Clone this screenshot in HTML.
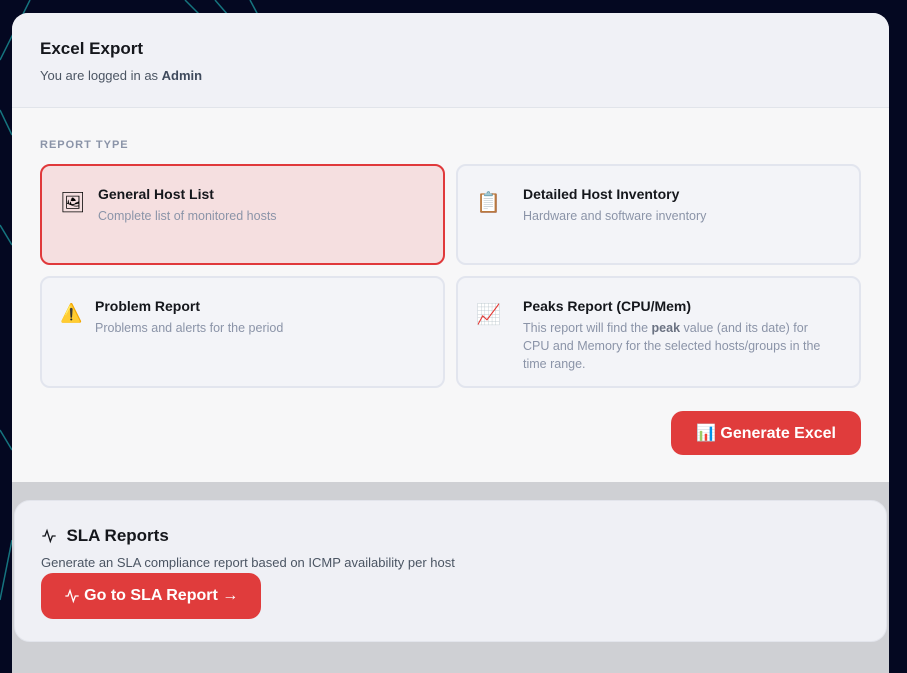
<!DOCTYPE html>
<html><head><meta charset="utf-8"><style>
*{box-sizing:border-box;margin:0;padding:0}
body{width:907px;height:657px;overflow:hidden;background:#040821;font-family:"Liberation Sans",sans-serif;position:relative}
.bg{position:absolute;inset:0}
.main{position:absolute;left:12px;top:13px;width:877px;height:660px;border-radius:16px 16px 0 0;overflow:hidden;background:#cfd0d4}
.hdr{height:95px;background:#f0f1f6;border-bottom:1px solid #e1e4ea;padding:26px 28px}
.hdr h1{font-size:17px;font-weight:bold;color:#15171c}
.hdr p{font-size:13px;color:#4b5563;margin-top:9px}
.hdr p b{color:#3f4a5c}
.body{position:absolute;top:95px;left:0;width:877px;height:374px;background:#f7f7f8}
.lbl{position:absolute;left:28px;top:31px;font-size:11px;font-weight:bold;letter-spacing:1px;color:#8b94a8}
.card{position:absolute;width:405px;border:2px solid #e2e5ee;border-radius:10px;background:#f3f4f8}
.card.sel{background:#f5dfe0;border-color:#e0393b}
.card .ic{position:absolute;left:18px;top:24px;font-size:20px}
.card h3{position:absolute;top:20px;font-size:14px;font-weight:bold;color:#15171c}
.card p{position:absolute;top:41px;font-size:12.5px;color:#8b94a8;line-height:18px;width:330px}
.card p b{color:#6b7282}
.btn{position:absolute;background:#e03c3c;color:#fff;font-weight:bold;border-radius:12px;display:flex;align-items:center;justify-content:center}
.sla{position:absolute;left:2px;top:487px;width:873px;height:142px;background:#eff0f5;border-radius:16px;border:1px solid #e3e5ec}
</style></head><body>
<svg class="bg" width="907" height="657"><g stroke="#1a8f96" stroke-width="1.5" fill="none" opacity=".8">
<path d="M30 0 L0 60"/><path d="M185 0 L200 15"/><path d="M215 0 L228 15"/><path d="M250 0 L258 15"/><path d="M0 110 L12 135"/><path d="M0 225 L12 245"/><path d="M0 430 L12 450"/><path d="M12 540 L0 600"/></g></svg>
<div class="main">
<div class="hdr"><h1>Excel Export</h1><p>You are logged in as <b>Admin</b></p></div>
<div class="body">
<div class="lbl">REPORT TYPE</div>
<div class="card sel" style="left:28px;top:56px;height:101px"><span class="ic">🖼</span><h3 style="left:56px">General Host List</h3><p style="left:56px">Complete list of monitored hosts</p></div>
<div class="card" style="left:444px;top:56px;height:101px"><span class="ic">📋</span><h3 style="left:65px">Detailed Host Inventory</h3><p style="left:65px">Hardware and software inventory</p></div>
<div class="card" style="left:28px;top:168px;height:112px"><span class="ic" style="font-size:18px;top:25px">⚠️</span><h3 style="left:53px">Problem Report</h3><p style="left:53px">Problems and alerts for the period</p></div>
<div class="card" style="left:444px;top:168px;height:112px"><span class="ic">📈</span><h3 style="left:65px">Peaks Report (CPU/Mem)</h3><p style="left:65px;width:302px">This report will find the <b>peak</b> value (and its date) for CPU and Memory for the selected hosts/groups in the time range.</p></div>
<div class="btn" style="left:659px;top:303px;width:190px;height:44px;font-size:16px">📊&nbsp;Generate Excel</div>
</div>
<div class="sla">
<div style="position:absolute;left:26px;top:25px;font-size:17px;font-weight:bold;color:#15171c;display:flex;align-items:center"><svg width="16" height="16" viewBox="0 0 24 24" fill="none" stroke="#15171c" stroke-width="2"><path d="M2 12h4l3-8 5 16 3-8h5"/></svg>&nbsp;&nbsp;SLA Reports</div>
<div style="position:absolute;left:26px;top:54px;font-size:13px;color:#4b5563">Generate an SLA compliance report based on ICMP availability per host</div>
<div class="btn" style="left:26px;top:72px;width:220px;height:46px;font-size:16px"><svg width="16" height="16" viewBox="0 0 24 24" fill="none" stroke="#fff" stroke-width="2"><path d="M2 12h4l3-8 5 16 3-8h5"/></svg>&nbsp;Go to SLA Report →</div>
</div>
</div>
</body></html>
